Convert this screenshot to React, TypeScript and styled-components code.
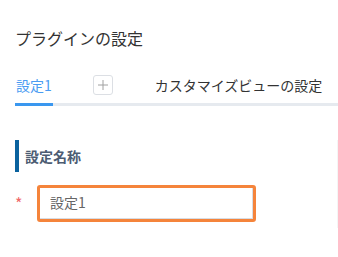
import React from "react";
import styled, { createGlobalStyle } from "styled-components";

const Global = createGlobalStyle`
  html, body { margin: 0; padding: 0; background: #fff; }
  body { font-family: "Noto Sans CJK JP", "Noto Sans", sans-serif; color: #333; }
`;

const Page = styled.div`
  padding: 26px 0 0 15px;
  width: 338px;
  box-sizing: border-box;
`;

const Title = styled.h1`
  margin: 0;
  font-size: 16px;
  line-height: 24px;
  font-weight: 400;
  color: #333;
`;

const TabBar = styled.div`
  margin-top: 25px;
  display: flex;
  align-items: flex-end;
  border-bottom: 3px solid #e6eaef;
`;

const Tab = styled.div<{ $active?: boolean }>`
  font-size: 14px;
  line-height: 20px;
  padding: 0 1px 8px;
  margin-bottom: -3px;
  color: ${(p) => (p.$active ? "#4a9cf2" : "#333")};
  border-bottom: 3px solid ${(p) => (p.$active ? "#3a97ef" : "transparent")};
  white-space: nowrap;
`;

const AddButton = styled.div`
  width: 20px;
  height: 20px;
  box-sizing: border-box;
  border: 1px solid #dcdfe4;
  border-radius: 3px;
  margin: 0 41px 8px 40px;
  align-self: flex-start;
  display: flex;
  align-items: center;
  justify-content: center;
`;

const Panel = styled.div`
  margin-top: 34px;
  padding-bottom: 6px;
  border-right: 1px solid #f5f5f5;
`;

const Heading = styled.div`
  height: 32px;
  border-left: 4px solid #0a629e;
  padding-left: 6px;
  display: flex;
  align-items: center;
  font-size: 14px;
  font-weight: 700;
  color: #4c5c72;
`;

const Field = styled.div`
  margin-top: 13px;
  display: flex;
  align-items: center;
`;

const Required = styled.span`
  width: 23px;
  font-size: 16px;
  color: #f06767;
  box-sizing: border-box;
  line-height: 1;
  margin-top: -2px;
`;

const Input = styled.input`
  width: 219px;
  height: 37px;
  box-sizing: border-box;
  border: 3px solid #f5843b;
  border-radius: 3px;
  padding: 0 10px 3px;
  font-family: "Noto Sans CJK JP", sans-serif;
  font-size: 14px;
  color: #666;
  outline: none;
  box-shadow: inset -1px -1px 0 #d8dce3;
  margin-left: -1px;
`;

export default function App() {
  return (
    <>
      <Global />
      <Page>
        <Title>プラグインの設定</Title>
        <TabBar>
          <Tab $active>設定1</Tab>
          <AddButton>
            <svg width="12" height="12" viewBox="0 0 12 12">
              <path d="M6 1v10M1 6h10" stroke="#a0a0a0" strokeWidth="1" />
            </svg>
          </AddButton>
          <Tab>カスタマイズビューの設定</Tab>
        </TabBar>
        <Panel>
          <Heading>設定名称</Heading>
          <Field>
            <Required>*</Required>
            <Input defaultValue="設定1" />
          </Field>
        </Panel>
      </Page>
    </>
  );
}
